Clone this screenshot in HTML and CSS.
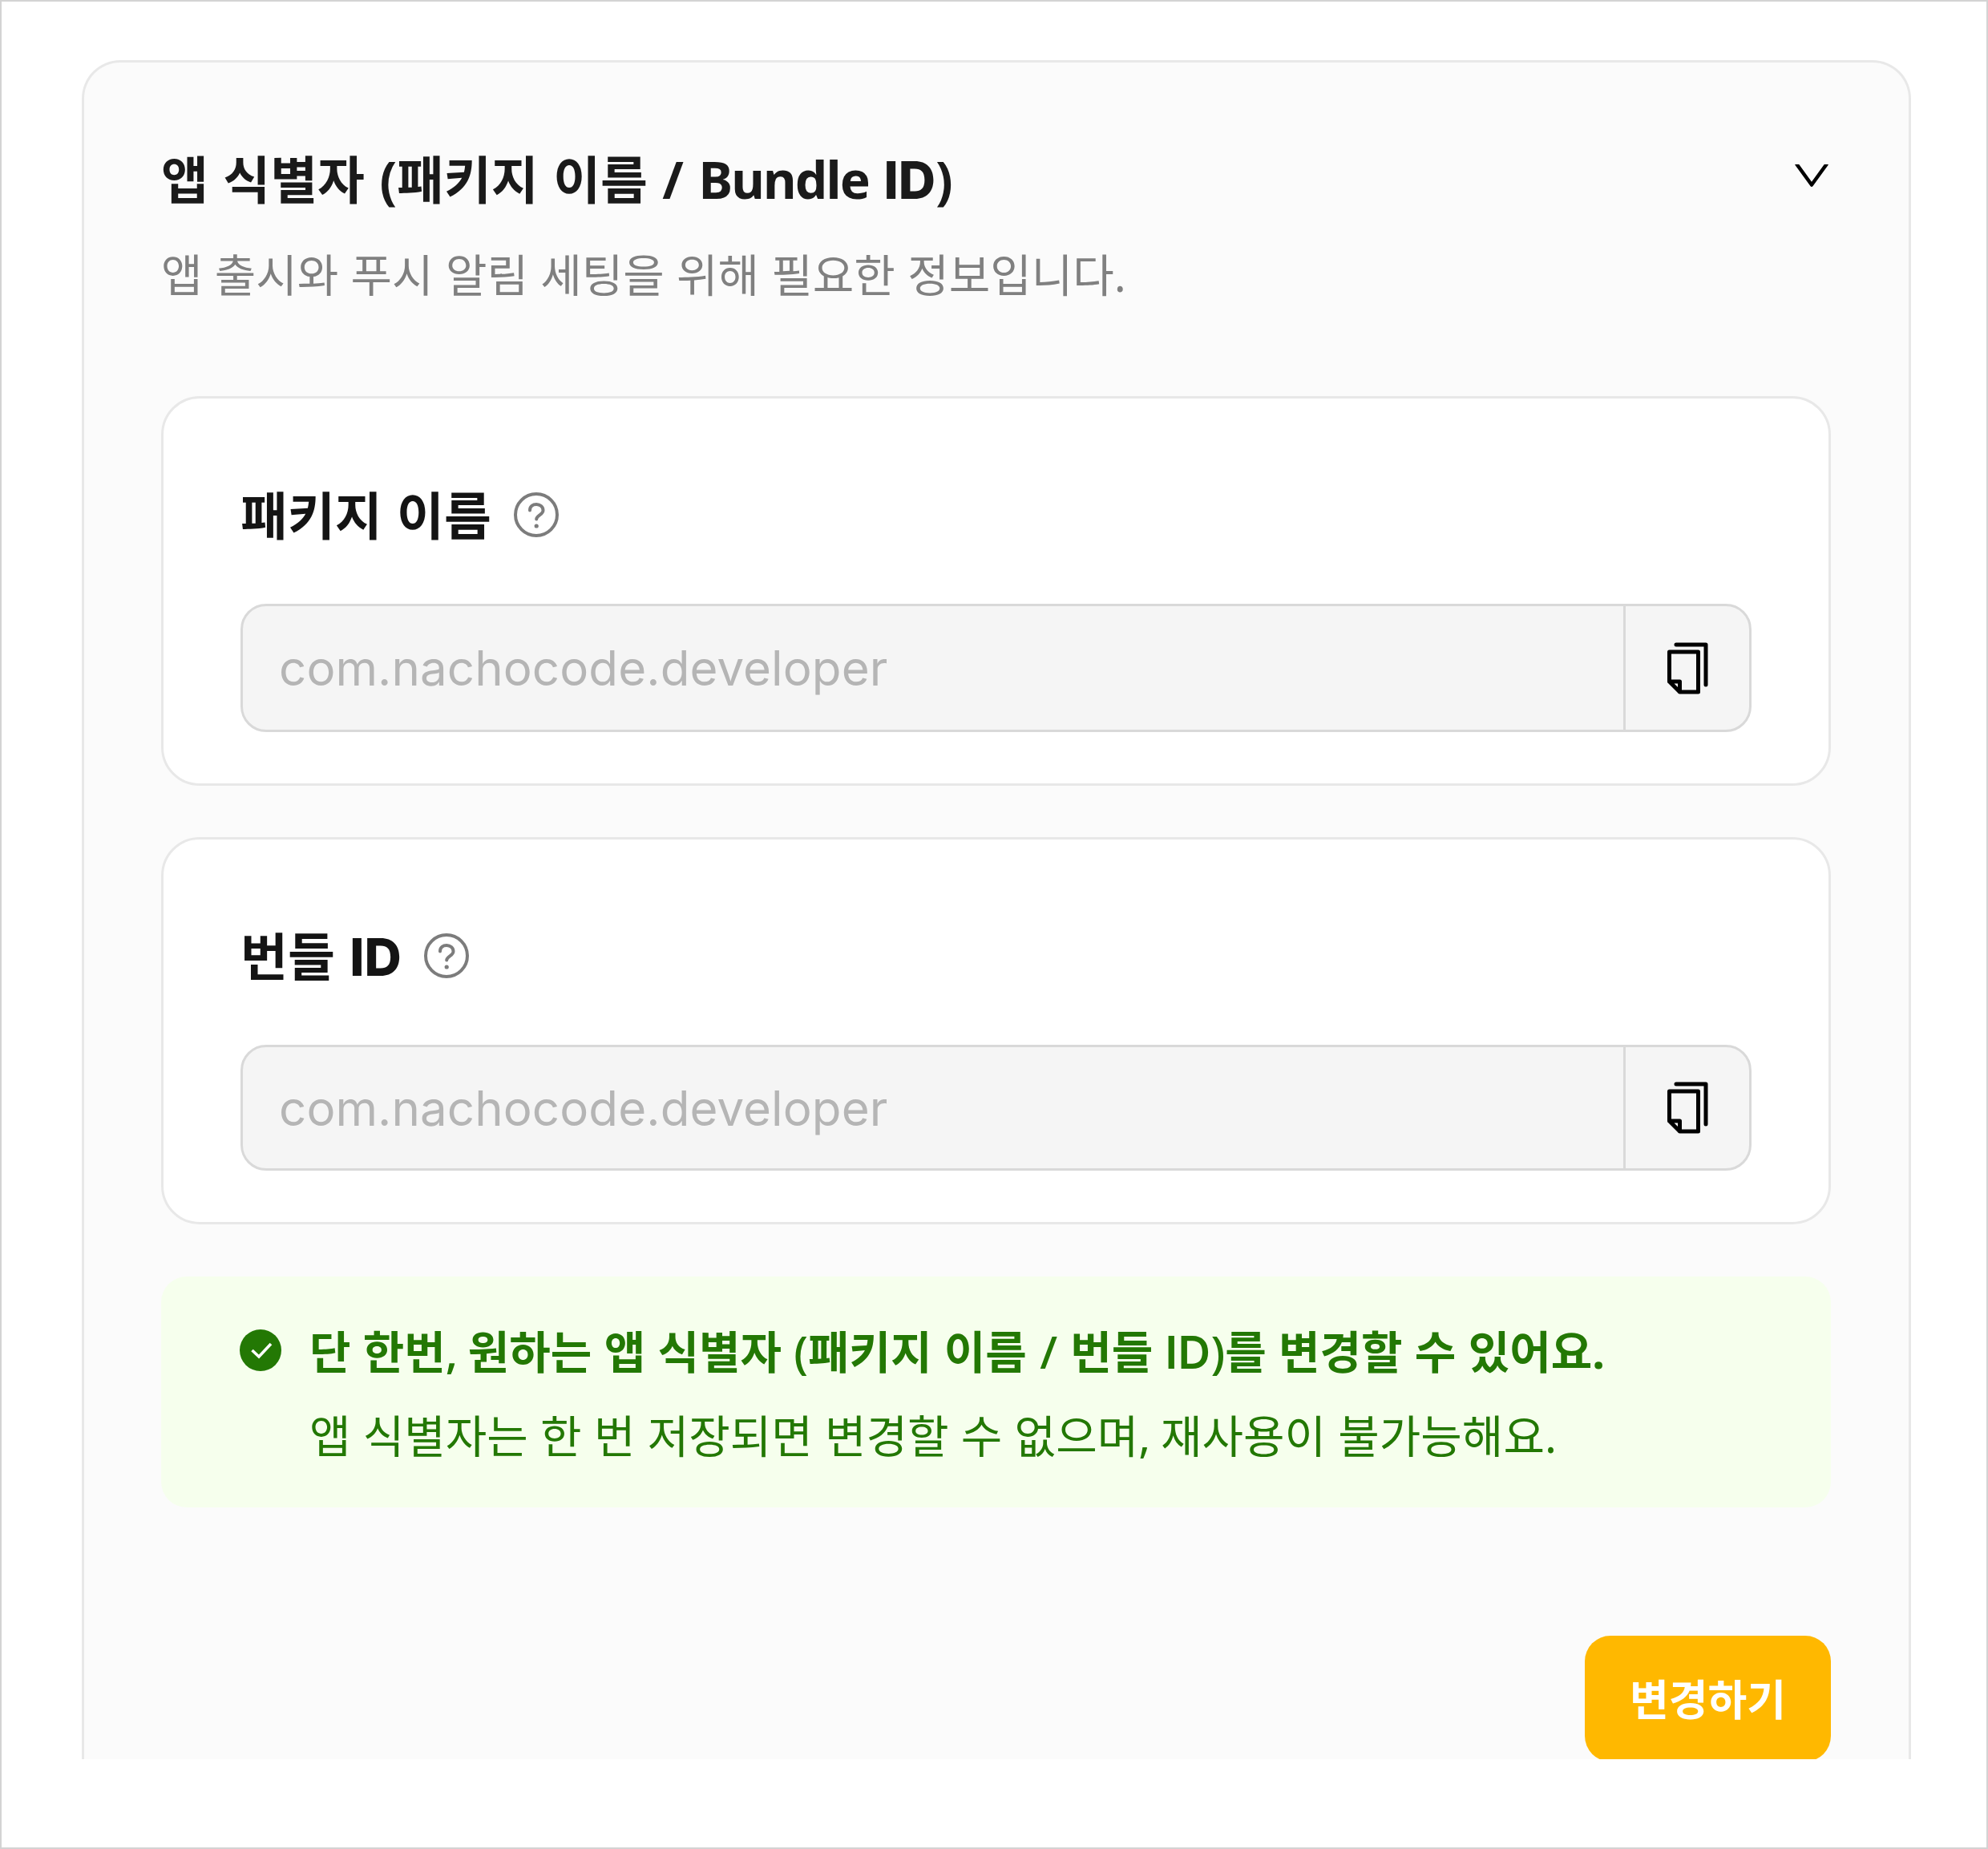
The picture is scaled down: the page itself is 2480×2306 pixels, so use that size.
FILE: index.html
```html
<!DOCTYPE html>
<html lang="ko">
<head>
<meta charset="utf-8">
<title>앱 식별자</title>
<link rel="stylesheet" href="styles.css">
</head>
<body>
<main class="frame">
  <section class="panel">
    <header class="panel-head">
      <div>
        <h1 class="panel-title">앱 식별자 (패키지 이름 / <span class="latin">Bundle</span> <span class="id">ID</span>)</h1>
        <p class="panel-desc">앱 출시와 푸시 알림 세팅을 위해 필요한 정보입니다.</p>
      </div>
      <svg class="chevron" viewBox="0 0 1024 1024"><path d="M884 256h-75c-5.1 0-9.9 2.5-12.9 6.6L512 654.2 227.9 262.6c-3-4.1-7.8-6.6-12.9-6.6h-75c-6.5 0-10.3 7.4-6.5 12.7l352.6 486.1c12.8 17.6 39 17.6 51.7 0l352.6-486.1c3.9-5.3.1-12.7-6.4-12.7z"/></svg>
    </header>

    <article class="card">
      <div class="card-head">
        <h2 class="card-title">패키지 이름</h2>
        <svg class="help" viewBox="0 0 56 56"><circle cx="28" cy="28" r="26"/><path d="M20 22.500C20 17.500 23.800 15 28.200 15s8.300 3 8.300 7.500c0 5.500-8.300 6-8.300 11"/><circle class="help-dot" cx="28.200" cy="42" r="2.600"/></svg>
      </div>
      <div class="field">
        <span class="field-value">com.nachocode.developer</span>
        <button class="copy"><svg class="copy-icon" viewBox="0 0 52 66"><path d="M11 3H48V53"/><path d="M2.500 12H38.500V62H15.500L2.500 49ZM2.500 49H15.500V62"/></svg></button>
      </div>
    </article>

    <article class="card card-bundle">
      <div class="card-head">
        <h2 class="card-title">번들 <span class="id">ID</span></h2>
        <svg class="help" viewBox="0 0 56 56"><circle cx="28" cy="28" r="26"/><path d="M20 22.500C20 17.500 23.800 15 28.200 15s8.300 3 8.300 7.500c0 5.500-8.300 6-8.300 11"/><circle class="help-dot" cx="28.200" cy="42" r="2.600"/></svg>
      </div>
      <div class="field">
        <span class="field-value">com.nachocode.developer</span>
        <button class="copy"><svg class="copy-icon" viewBox="0 0 52 66"><path d="M11 3H48V53"/><path d="M2.500 12H38.500V62H15.500L2.500 49ZM2.500 49H15.500V62"/></svg></button>
      </div>
    </article>

    <div class="notice">
      <svg class="check" viewBox="0 0 52 52"><circle cx="26" cy="26" r="26"/><path d="M15.500 26L24 34L39 18"/></svg>
      <div>
        <p class="notice-title">단 한번<span class="mark comma">,</span> 원하는 앱 식별자 <span class="mark">(</span>패키지 이름 <span class="mark slash">/</span> 번들 <span class="mark id">ID</span><span class="mark">)</span>를 변경할 수 있어요.</p>
        <p class="notice-text">앱 식별자는 한 번 저장되면 변경할 수 없으며<span class="comma">,</span> 재사용이 불가능해요.</p>
      </div>
    </div>

    <footer class="actions"><button class="submit">변경하기</button></footer>
  </section>
</main>
</body>
</html>
```

FILE: styles.css
```css
* { box-sizing: border-box; margin: 0; padding: 0; }
body { background: #fff; font-family: "Noto Sans", "Noto Sans CJK KR", sans-serif; }
button { border: 0; font: inherit; }
svg { display: block; flex: none; }
.frame { height: 2306px; border: 2px solid #d3d3d3; padding: 73px 94px 110px 100px; }
.panel { height: 2119px; overflow: hidden; background: #fbfbfb; border: 3px solid #e8e8e8; border-bottom: 0; border-radius: 48px 48px 0 0; padding: 0 97px 0 96px; }
.panel-head { display: flex; justify-content: space-between; height: 416px; padding-top: 106px; }
.panel-title { font-size: 64px; font-weight: 700; line-height: 80px; color: #1a1a1a; white-space: nowrap; word-spacing: 1.8px; }
.latin { letter-spacing: -1.8px; }
.id { font-family: Inter, sans-serif; font-weight: 800; }
.panel-desc { margin-top: 41px; font-size: 56px; line-height: 72px; color: #808080; white-space: nowrap; word-spacing: 0.7px; }
.chevron { width: 56px; height: 56px; margin: 7px -4px 0 0; fill: #000; }
.card { height: 486px; background: #fff; border: 3px solid #e8e8e8; border-radius: 48px; padding: 106px 96px 0 96px; }
.card-bundle { height: 483px; margin-top: 64px; }
.card-head { display: flex; gap: 28px; height: 80px; }
.card-title { font-size: 64px; font-weight: 700; line-height: 80px; color: #141414; word-spacing: 1.8px; }
.help { width: 56px; height: 56px; margin-top: 11px; fill: none; stroke: #7c7c7c; stroke-width: 4; stroke-linecap: round; }
.help-dot { fill: #7c7c7c; stroke: none; }
.field { display: flex; height: 160px; margin-top: 70px; background: #f5f5f5; border: 3px solid #d9d9d9; border-radius: 32px; }
.card-bundle .field { height: 157px; }
.field-value { flex: 1; display: flex; align-items: center; padding-left: 45px; font-family: Inter, sans-serif; font-size: 60px; letter-spacing: 0.1px; color: #b5b5b5; }
.copy { display: grid; place-items: center; width: 157px; border-left: 3px solid #d9d9d9; background: none; }
.copy-icon { width: 52px; height: 66px; margin: 2px 0 0 2px; fill: none; stroke: #000; stroke-width: 5; stroke-linejoin: round; stroke-linecap: round; }
.card-bundle .copy-icon { margin-top: 0; }
.notice { display: flex; gap: 35px; height: 288px; margin-top: 65px; padding: 57px 98px 0; background: #f6ffed; border-radius: 32px; color: #237804; font-size: 56px; line-height: 72px; white-space: nowrap; word-spacing: 0.7px; }
.check { width: 52px; height: 52px; margin-top: 9px; fill: #237804; }
.check path { fill: none; stroke: #fff; stroke-width: 3.6; }
.notice-title { font-weight: 700; }
.mark { font-family: "Open Sans", sans-serif; font-weight: 600; }
.mark.id { font-family: Inter, sans-serif; letter-spacing: 0.5px; }
.slash { margin: 0 1px; }
.comma { letter-spacing: -2.5px; }
.notice-text { margin-top: 31px; }
.actions { display: flex; justify-content: flex-end; margin-top: 160px; }
.submit { width: 307px; height: 157px; padding-bottom: 2px; background: #ffb800; border-radius: 32px; color: #fff; font-size: 53px; font-weight: 700; }
```
